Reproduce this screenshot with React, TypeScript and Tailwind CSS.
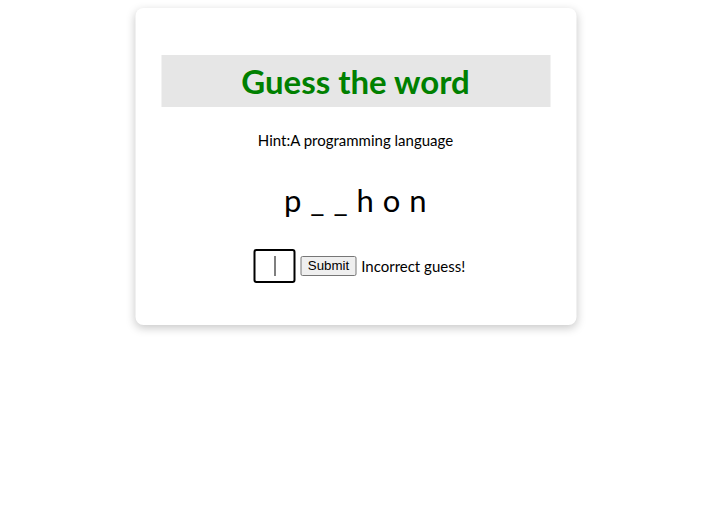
export default function App() {
  return (
    <div className="min-h-[511px] w-full bg-white pt-2 font-['Lato',sans-serif] text-black">
      <div className="mx-auto w-[441px] -translate-x-[1.5px] rounded-lg bg-white px-[26px] pb-[42px] pt-[47px] text-center shadow-[0_3px_10px_rgba(0,0,0,0.22)]">
        <h1 className="flex h-[52px] items-center justify-center bg-[#e6e6e6] pt-[2px] text-[33px] font-bold text-[#008000]">
          Guess the word
        </h1>
        <p className="mt-[21px] text-[15px] leading-6">Hint:A programming language</p>
        <p className="mt-6 text-[31px] leading-[48px] tracking-[0.5px]">p _ _ h o n</p>
        <div className="mt-[25px] flex items-center justify-center gap-[5px] pl-2">
          <div className="flex h-[34px] w-[42px] items-center justify-center rounded-[3px] border-2 border-black">
            <span className="block h-[20px] w-px bg-black"></span>
          </div>
          <button className="flex h-[20px] items-center rounded-[2px] border border-[#767676] bg-[#efefef] px-[6px] font-['Liberation_Sans',sans-serif] text-[13.3px] leading-[16px]">
            Submit
          </button>
          <span className="text-[15px]">Incorrect guess!</span>
        </div>
      </div>
    </div>
  );
}
